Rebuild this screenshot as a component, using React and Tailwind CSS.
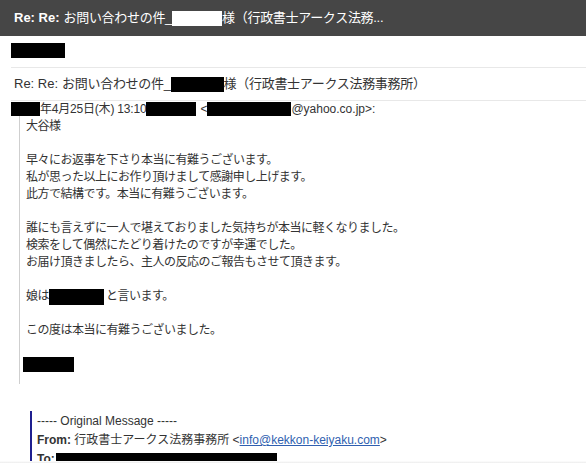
export default function App() {
  const font = { fontFamily: '"Liberation Sans", "Noto Sans CJK JP", sans-serif' };
  const Box = ({ w, h = 'h-[15px]', white }) => (
    <span className={`inline-block align-middle ${w} ${h} ${white ? 'bg-white' : 'bg-black'}`} />
  );
  return (
    <div className="w-[586px] h-[463px] overflow-hidden bg-white relative" style={font}>
      <div className="h-[36px] bg-[#464646] flex items-center pl-[14px] text-white text-[13px] whitespace-nowrap">
        <span className="font-bold">Re: Re:</span>
        <span className="ml-[4px] tracking-[-0.3px]">お問い合わせの件_</span>
        <span className="inline-block w-[50px] h-[15px] bg-white" />
        <span className="tracking-[-0.3px]">様（行政書士アークス法務...</span>
      </div>
      <div className="ml-[11px] h-[32px] border-b border-[#e8e8e8] pt-[7px]">
        <div className="w-[54px] h-[15px] bg-black" />
      </div>
      <div className="ml-[11px] h-[33px] border-b border-[#e8e8e8] flex items-center pl-[3px] text-[13px] text-[#333] whitespace-nowrap">
        <span>Re: Re:</span>
        <span className="ml-[4px] tracking-[-0.3px]">お問い合わせの件_</span>
        <span className="inline-block w-[53px] h-[15px] bg-black" />
        <span className="tracking-[-0.3px]">様（行政書士アークス法務事務所）</span>
      </div>
      <div className="ml-[11px] h-[15px] flex items-center text-[12px] text-[#333] whitespace-nowrap">
        <span className="inline-block w-[29px] h-[14px] bg-black" />
        <span className="tracking-[-0.2px]">年4月25日(木) 13:10</span>
        <span className="inline-block w-[50px] h-[14px] bg-black" />
        <span className="ml-[4px]">&lt;</span>
        <span className="inline-block w-[84px] h-[14px] bg-black" />
        <span>@yahoo.co.jp&gt;:</span>
      </div>
      <div className="ml-[19px] border-l border-[#cfcfcf] pl-[6px] pt-[2px] pb-[11px] text-[12px] leading-[17px] text-[#333] tracking-[-0.5px] whitespace-nowrap">
        <div>大谷様</div>
        <div>&nbsp;</div>
        <div>早々にお返事を下さり本当に有難うございます。</div>
        <div>私が思った以上にお作り頂けまして感謝申し上げます。</div>
        <div>此方で結構です。本当に有難うございます。</div>
        <div>&nbsp;</div>
        <div>誰にも言えずに一人で堪えておりました気持ちが本当に軽くなりました。</div>
        <div>検索をして偶然にたどり着けたのですが幸運でした。</div>
        <div>お届け頂きましたら、主人の反応のご報告もさせて頂きます。</div>
        <div>&nbsp;</div>
        <div className="flex items-center">
          <span>娘は</span>
          <span className="inline-block w-[55px] h-[16px] bg-black" />
          <span className="ml-[2px]">と言います。</span>
        </div>
        <div>&nbsp;</div>
        <div>この度は本当に有難うございました。</div>
        <div>&nbsp;</div>
        <div className="h-[17px] flex items-center -ml-[3px]">
          <span className="inline-block w-[51px] h-[15px] bg-black" />
        </div>
      </div>
      <div className="ml-[30px] mt-[27px] border-l-2 border-[#1f1f8f] pl-[5px] text-[12px] text-[#333] leading-[19px] whitespace-nowrap">
        <div className="pt-[1px]">----- Original Message -----</div>
        <div>
          <span className="font-bold">From:</span> 行政書士アークス法務事務所 &lt;
          <span className="text-[#2f5fb0] underline">info@kekkon-keiyaku.com</span>&gt;
        </div>
        <div className="flex items-center">
          <span className="font-bold">To:</span>
          <span className="inline-block w-[221px] h-[14px] bg-black ml-[1px]" />
        </div>
      </div>
      <div className="absolute left-0 right-0 bottom-0 h-[2px] bg-gradient-to-b from-white to-[#ececec]" />
    </div>
  );
}
